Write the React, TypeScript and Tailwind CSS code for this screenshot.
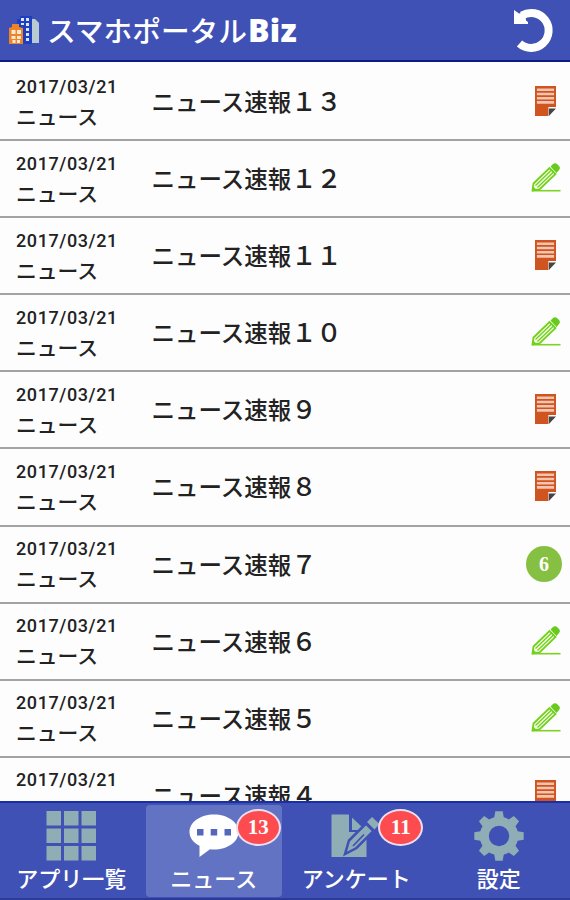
import React from "react";

type NewsIcon = "memo" | "pencil" | "count";

type NewsItem = {
  title: string;
  no: string;
  icon: NewsIcon;
};

const newsList: NewsItem[] = [
  { title: "ニュース速報", no: "１３", icon: "memo" },
  { title: "ニュース速報", no: "１２", icon: "pencil" },
  { title: "ニュース速報", no: "１１", icon: "memo" },
  { title: "ニュース速報", no: "１０", icon: "pencil" },
  { title: "ニュース速報", no: "９", icon: "memo" },
  { title: "ニュース速報", no: "８", icon: "memo" },
  { title: "ニュース速報", no: "７", icon: "count" },
  { title: "ニュース速報", no: "６", icon: "pencil" },
  { title: "ニュース速報", no: "５", icon: "pencil" },
  { title: "ニュース速報", no: "４", icon: "memo" },
];

const LogoIcon = () => (
  <svg width="31" height="30" viewBox="0 0 31 30">
    <path d="M23 4h3l4 4v20h-7z" fill="#b9cbd2" />
    <path d="M8 4h3V1h12v28H8z" fill="#1d3fc0" />
    <path
      d="M12 3h3v3h-3zM17 3h3v3h-3zM12 8h3v2h-3zM17 8h3v3h-3zM17 13h3v3h-3zM17 18h3v3h-3zM17 23h3v3h-3z"
      fill="#dbe6fb"
    />
    <path d="M0 13l3-1V9h7v3l4 1v16H0z" fill="#ee8427" />
    <path
      d="M2.500 15h4v4h-4zM8 15h4v4H8zM2.500 21h4v3h-4zM8 21h4v3H8zM3.500 25h3v3h-3zM8 25h3v3H8z"
      fill="#ffe9cf"
    />
  </svg>
);

const ReloadIcon = () => (
  <svg width="42" height="46" viewBox="0 0 42 46">
    <path
      d="M9 8.500A17.500 17.500 0 1 1 6.500 36.500"
      fill="none"
      stroke="#fff"
      strokeWidth="8"
    />
    <path d="M1 3l5 3.500 6-1 1 8 2 1.500v2H1z" fill="#fff" />
  </svg>
);

const MemoIcon = () => (
  <svg width="21" height="30" viewBox="0 0 22 30" preserveAspectRatio="none">
    <path d="M0 0h22v21h-8v9H0z" fill="#d0541f" />
    <path
      d="M2 2.500h18v2.500H2zM2 6.700h18v2.500H2zM2 10.900h18v2.500H2zM2 15.100h18v2.700H2z"
      fill="#f3c4b0"
    />
    <path d="M14.500 22.500H22L14.500 30z" fill="#444" />
  </svg>
);

const PencilIcon = () => (
  <svg width="30" height="30" viewBox="0 0 30 30">
    <path d="M1 27.700h28.500" stroke="#7ed321" strokeWidth="1.600" />
    <path
      d="M1.500 27.500L2.500 20.500 18.500 5l6 6L8.500 26.500z"
      fill="#f3fbe6"
      stroke="#72d11b"
      strokeWidth="1.800"
    />
    <path
      d="M4.500 22.500L20.500 7M6.500 24.500L22.500 9"
      stroke="#72d11b"
      strokeWidth="1.300"
    />
    <path d="M1 28l1-5 4 4.500z" fill="#72d11b" />
    <path d="M19.500 3.500L22 1c1-1 3-1 4 0l2 2c1.200 1.200 1.200 2.800 0 4l-2.500 3z" fill="#67ca1c" />
  </svg>
);

const GridIcon = () => (
  <svg width="50" height="50" viewBox="0 0 50 50">
    <path
      d="M0.500 0h14.500v14.500H0.500zM18 0h14.500v14.500H18zM35.500 0H50v14.500H35.500zM0.500 17.500h14.500v14.500H0.500zM18 17.500h14.500v14.500H18zM35.500 17.500H50v14.500H35.500zM0.500 35h14.500v14.500H0.500zM18 35h14.500v14.500H18zM35.500 35H50v14.500H35.500z"
      fill="#8fadb5"
    />
  </svg>
);

const ChatIcon = () => (
  <svg width="50" height="50" viewBox="0 0 50 50">
    <path
      d="M25 3.500C38.500 3.500 49.500 11 49.500 21S38.500 38.500 25 38.500c-1.500 0-2.500 0-4-.2L10.500 46V34.800C4 31.500.5 26.500.5 21 .5 11 11.500 3.500 25 3.500z"
      fill="#fff"
    />
    <path d="M8 18h6.500v6.500H8zM21.700 18h6.500v6.500h-6.500zM35.500 18H42v6.500h-6.500z" fill="#5467bd" />
  </svg>
);

const SurveyIcon = () => (
  <svg width="50" height="50" viewBox="0 0 50 50">
    <path d="M0.500 3.500H18V21h17.500v25H0.500z" fill="#8fadb5" />
    <path d="M21 6.500l10 9.500-3.500 3H21z" fill="#8fadb5" />
    <path
      d="M14 43l4-13.500L35 12.500l7.500 7.500L25.500 37z"
      fill="#8fadb5"
      stroke="#3f51b5"
      strokeWidth="2.500"
    />
    <path d="M22 35l11-11.500" stroke="#3f51b5" strokeWidth="1.800" />
    <path d="M36 11l5-5 7.500 7-5 5.500z" fill="#8fadb5" />
  </svg>
);

const GearIcon = () => (
  <svg width="50" height="50" viewBox="-25 -25 50 50">
    <circle r="14.700" fill="none" stroke="#8fadb5" strokeWidth="9" />
    {[0, 45, 90, 135, 180, 225, 270, 315].map((deg) => (
      <path
        key={deg}
        d="M-5-17l1.300-7.700h7.400L5-17z"
        fill="#8fadb5"
        transform={`rotate(${deg})`}
      />
    ))}
  </svg>
);

const RowIcon = ({ icon }: { icon: NewsIcon }) => {
  if (icon === "memo") return <MemoIcon />;
  if (icon === "pencil") return <PencilIcon />;
  return (
    <div className="-ml-[3px] flex h-9 w-9 items-center justify-center rounded-full bg-[#85c043] font-['Liberation_Serif',serif] text-[20px] font-bold text-white">
      6
    </div>
  );
};

const NewsRow = ({ item }: { item: NewsItem }) => (
  <li className="flex h-[77.1px] shrink-0 border-b-2 border-[#a3a3a3] pl-4">
    <div className="w-[135.5px] shrink-0 whitespace-nowrap pt-[8.500px] text-[#222]">
      <div className="h-[27px] font-[Roboto,sans-serif] text-[18px] font-medium leading-[27px] tracking-[0.6px]">
        2017/03/21
      </div>
      <div className="text-[20.800px] font-medium leading-[33px]">ニュース</div>
    </div>
    <div className="flex-1 whitespace-nowrap pt-[19px] text-[23.500px] font-medium leading-[34px] text-[#222]">
      {item.title}
      <span className="text-[25.500px] tracking-[-0.5px]">{item.no}</span>
    </div>
    <div className="mt-[19px] flex h-9 w-[49px] shrink-0 items-center justify-center">
      <RowIcon icon={item.icon} />
    </div>
  </li>
);

type TabProps = {
  label: string;
  icon: React.ReactNode;
  badge?: number;
  active?: boolean;
};

const Tab = ({ label, icon, badge, active }: TabProps) => (
  <div
    className={`relative mx-[3.25px] mt-[2px] flex h-[92px] flex-1 flex-col items-center rounded-[4px] pt-[6px] ${
      active ? "bg-[#6373c3]" : ""
    }`}
  >
    {icon}
    <span className="whitespace-nowrap text-[22px] font-medium leading-[32px] text-white">
      {label}
    </span>
    {badge && (
      <div className="absolute left-[90px] top-[4px] flex h-[37px] w-[45px] items-center justify-center rounded-[50%] border-2 border-[#e9dff0] bg-[#fd4b4f] font-['Liberation_Serif',serif] text-[21px] font-bold text-white">
        {badge}
      </div>
    )}
  </div>
);

const App = () => {
  return (
    <div className="flex h-[900px] w-[570px] flex-col overflow-hidden bg-[#fdfdfd] font-['Noto_Sans_CJK_JP',sans-serif]">
      <header className="flex h-[62px] shrink-0 items-center border-b-2 border-[#0c1c85] bg-[#3f51b5] pl-[9px] pr-[15px]">
        <LogoIcon />
        <h1 className="ml-[7px] flex items-center whitespace-nowrap text-[28.700px] font-medium leading-[40px] text-white">
          スマホポータル
          <span className="ml-[1px] font-['Open_Sans',sans-serif] text-[32px] font-extrabold tracking-[0.3px]">
            Biz
          </span>
        </h1>
        <div className="ml-auto">
          <ReloadIcon />
        </div>
      </header>

      {/* news list */}
      <ul className="flex min-h-0 flex-1 flex-col overflow-hidden pt-[2px]">
        {newsList.map((item) => (
          <NewsRow key={item.no} item={item} />
        ))}
      </ul>

      {/* bottom tabs */}
      <nav className="flex h-[99px] shrink-0 border-b-2 border-t-2 border-b-[#2c3b98] border-t-[#1b2fa4] bg-[#3f51b5]">
        <Tab label="アプリ一覧" icon={<GridIcon />} />
        <Tab label="ニュース" icon={<ChatIcon />} badge={13} active />
        <Tab label="アンケート" icon={<SurveyIcon />} badge={11} />
        <Tab label="設定" icon={<GearIcon />} />
      </nav>
    </div>
  );
};

export default App;
